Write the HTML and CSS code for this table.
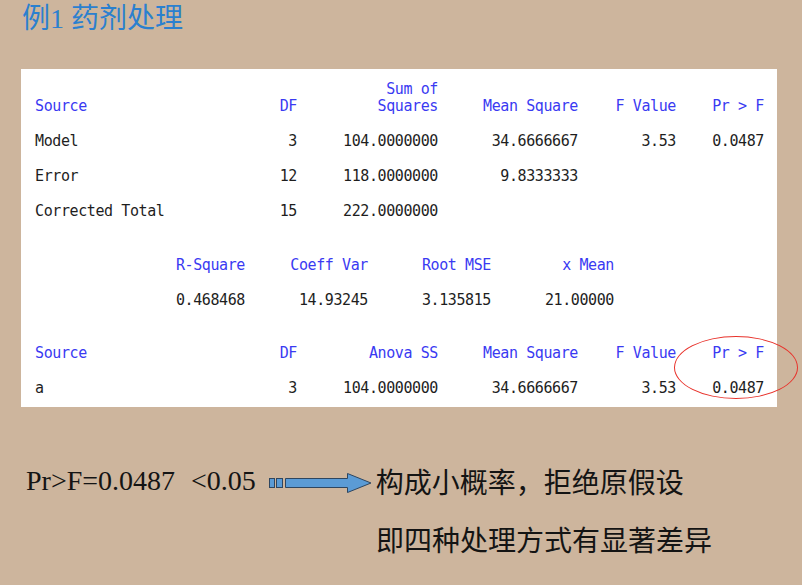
FILE: index.html
```html
<!DOCTYPE html>
<html lang="zh">
<head>
<meta charset="utf-8">
<title>例1 药剂处理</title>
<link rel="stylesheet" href="styles.css">
</head>
<body>
<div class="slide">
  <h1 class="title">例1 药剂处理</h1>

  <div class="output">
    <div class="anova">
      <div class="row head">
        <span class="src">Source</span><span>DF</span><span>Sum of<br>Squares</span><span>Mean Square</span><span>F Value</span><span>Pr &gt; F</span>
      </div>
      <div class="row">
        <span class="src">Model</span><span>3</span><span>104.0000000</span><span>34.6666667</span><span>3.53</span><span>0.0487</span>
      </div>
      <div class="row">
        <span class="src">Error</span><span>12</span><span>118.0000000</span><span>9.8333333</span><span></span><span></span>
      </div>
      <div class="row">
        <span class="src">Corrected Total</span><span>15</span><span>222.0000000</span><span></span><span></span><span></span>
      </div>
    </div>

    <div class="stats">
      <div class="row head">
        <span>R-Square</span><span>Coeff Var</span><span>Root MSE</span><span>x Mean</span>
      </div>
      <div class="row">
        <span>0.468468</span><span>14.93245</span><span>3.135815</span><span>21.00000</span>
      </div>
    </div>

    <div class="anova type3">
      <div class="row head">
        <span class="src">Source</span><span>DF</span><span>Anova SS</span><span>Mean Square</span><span>F Value</span><span>Pr &gt; F</span>
      </div>
      <div class="row">
        <span class="src">a</span><span>3</span><span>104.0000000</span><span>34.6666667</span><span>3.53</span><span>0.0487</span>
      </div>
    </div>

    <div class="ring"></div>
  </div>

  <div class="conclusion">
    <p class="line first">
      <span class="pv">Pr&gt;F=0.0487</span><span class="lt">&lt;0.05</span>
      <svg class="arrow" width="106" height="24" viewBox="0 0 106 24" aria-hidden="true">
        <rect x="2.5" y="7.5" width="5" height="9" fill="#5b9bd5" stroke="#2e4660" stroke-width="1"/>
        <rect x="9.5" y="7.5" width="6" height="9" fill="#5b9bd5" stroke="#2e4660" stroke-width="1"/>
        <path d="M18.5 7.5 H80.5 V2.5 L104 12 L80.5 21.5 V16.5 H18.5 Z" fill="#5b9bd5" stroke="#2e4660" stroke-width="1" stroke-linejoin="miter"/>
      </svg>
      <span class="cn">构成小概率，拒绝原假设</span>
    </p>
    <p class="line second">即四种处理方式有显著差异</p>
  </div>
</div>
</body>
</html>
```

FILE: styles.css
```css
html, body {
  margin: 0;
  padding: 0;
}

body {
  background: #cdb59d;
  width: 802px;
  height: 585px;
  overflow: hidden;
}

.slide {
  display: flex;
  flex-direction: column;
  padding-left: 21px;
}

.title {
  margin: 0;
  padding-left: 1px;
  font-family: "Liberation Serif", "Noto Sans CJK SC", sans-serif;
  font-weight: normal;
  font-size: 28px;
  line-height: 37px;
  height: 37px;
  color: #2b80cf;
}

.output {
  position: relative;
  margin-top: 32px;
  width: 756px;
  height: 338px;
  box-sizing: border-box;
  background: #ffffff;
  padding: 12px 13px 0 14px;
  font-family: "DejaVu Sans Mono", "Liberation Mono", monospace;
  font-size: 15px;
  letter-spacing: -0.4px;
  color: #1e1e1e;
}

.row {
  display: grid;
  height: 35px;
  line-height: 35px;
  white-space: pre;
}

.row > span {
  text-align: right;
}

.row > .src {
  text-align: left;
}

.head {
  color: #3a3af2;
}

.anova .row {
  grid-template-columns: 200px 62px 141px 140px 98px 88px;
}

.anova .head {
  height: auto;
  line-height: 17px;
  align-items: end;
  margin-bottom: 9px;
}

.anova.type3 {
  margin-top: 18px;
}

.anova.type3 .head {
  height: 35px;
  line-height: 35px;
  margin-bottom: 0;
}

.stats {
  margin-top: 19px;
}

.stats .row {
  grid-template-columns: 210px 123px 123px 123px;
}

.ring {
  position: absolute;
  left: 653px;
  top: 267px;
  width: 124px;
  height: 63px;
  box-sizing: border-box;
  border: 1.5px solid #e8322b;
  border-radius: 50%;
}

.conclusion {
  margin-top: 45px;
  font-family: "Liberation Serif", "Noto Sans CJK SC", serif;
  font-size: 28px;
  color: #141414;
}

.line {
  margin: 0;
  height: 58px;
  line-height: 58px;
  display: flex;
  align-items: center;
  white-space: nowrap;
}

.first {
  padding-left: 5px;
}

.lt {
  margin-left: 16px;
}

.arrow {
  display: block;
  margin-left: 11px;
  margin-top: 4px;
}

.cn {
  margin-left: 3px;
  font-family: "Noto Sans CJK SC", sans-serif;
}

.second {
  padding-left: 355px;
  font-family: "Noto Sans CJK SC", sans-serif;
}
```
